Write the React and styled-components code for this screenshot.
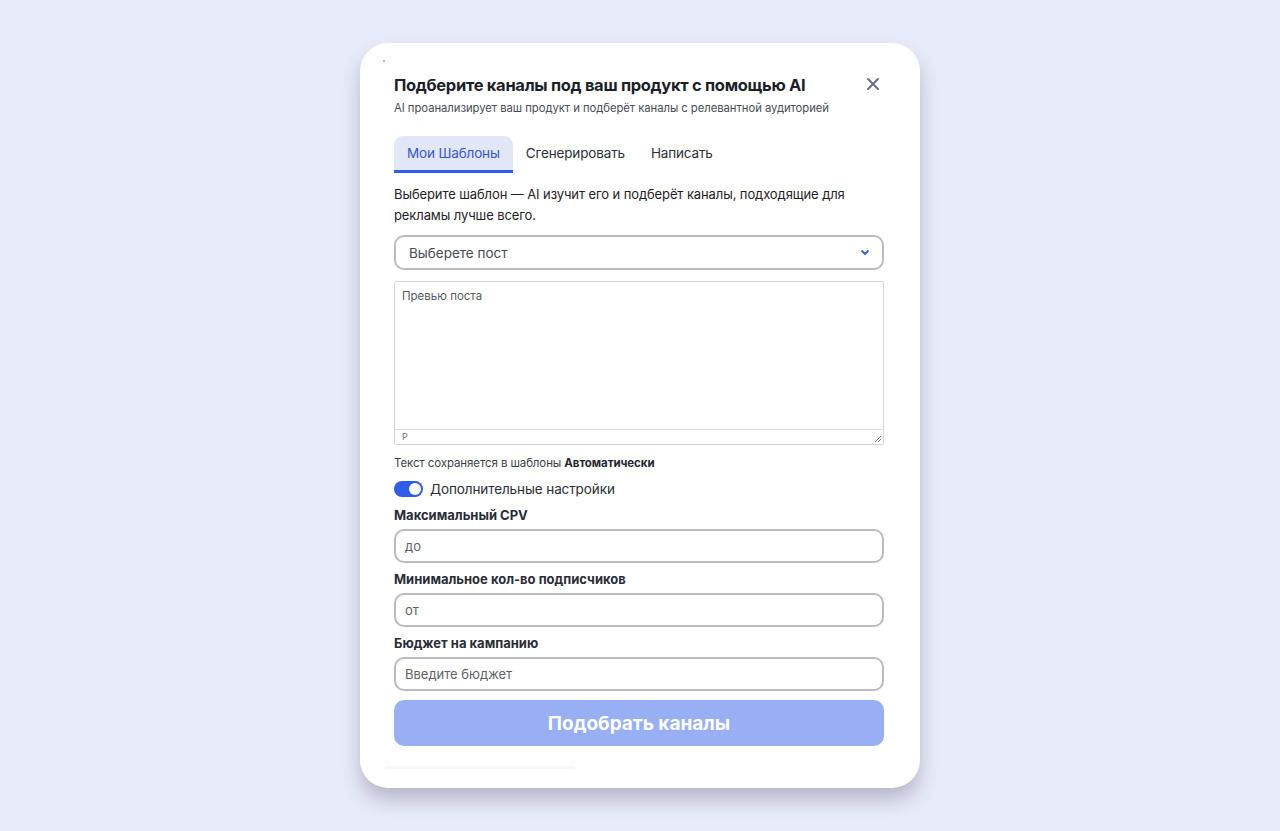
import React, { useState } from 'react';
import styled, { createGlobalStyle } from 'styled-components';

const Global = createGlobalStyle`
  html, body { margin: 0; padding: 0; }
  body {
    background: #e7eaf8;
    font-family: Inter, "Noto Sans", sans-serif;
    color: #1f2330;
  }
`;

const Page = styled.div`
  min-height: 831px;
  display: flex;
  justify-content: center;
  padding-top: 43px;
  box-sizing: border-box;
`;

const Card = styled.div`
  position: relative;
  width: 560px;
  height: 745px;
  box-sizing: border-box;
  background: #fff;
  border-radius: 28px;
  padding: 30px 36px 0 34px;
  box-shadow: 0 12px 18px rgba(60, 66, 90, 0.28);
`;

const Dot = styled.span`
  position: absolute;
  left: 23px;
  top: 17px;
  width: 2px;
  height: 2px;
  background: #9aa0ad;
  border-radius: 1px;
`;

const Header = styled.div`
  display: flex;
  justify-content: space-between;
  align-items: flex-start;
`;

const Title = styled.h2`
  margin: 0;
  font-size: 16.5px;
  font-weight: 700;
  line-height: 24px;
  letter-spacing: -0.3px;
  color: #1c1f2a;
`;

const Subtitle = styled.p`
  margin: 3px 0 0;
  font-size: 11.3px;
  line-height: 16px;
  letter-spacing: -0.05px;
  color: #474c58;
`;

const Close = styled.button`
  border: 0;
  background: none;
  padding: 0;
  margin: 4px 3px 0 0;
  width: 16px;
  height: 16px;
  color: #6a7080;
  cursor: pointer;
`;

const Tabs = styled.div`
  display: flex;
  margin-top: 20px;
`;

const Tab = styled.div`
  height: 37px;
  padding: 0 13px;
  display: flex;
  align-items: center;
  font-size: 13.5px;
  letter-spacing: -0.15px;
  border-radius: 9px 9px 0 0;
  box-sizing: border-box;
  color: ${p => (p.$active ? '#3556d6' : '#2c2f38')};
  background: ${p => (p.$active ? '#e2e7f8' : 'transparent')};
  border-bottom: 3px solid ${p => (p.$active ? '#2f5ce8' : 'transparent')};
`;

const Lead = styled.p`
  margin: 11px 0 0;
  font-size: 13px;
  line-height: 21px;
  letter-spacing: -0.1px;
  color: #1f2128;
`;

const Select = styled.div`
  margin-top: 9px;
  height: 35px;
  box-sizing: border-box;
  border: 2px solid #b9bbc0;
  border-radius: 10px;
  display: flex;
  align-items: center;
  justify-content: space-between;
  padding: 0 12px 0 13px;
  font-size: 13.5px;
  color: #464a53;
`;

const Preview = styled.div`
  position: relative;
  margin-top: 11px;
  height: 164px;
  box-sizing: border-box;
  border: 1px solid #d3d5d9;
  border-radius: 2px;
  display: flex;
  flex-direction: column;
`;

const PreviewBody = styled.div`
  flex: 1;
  padding: 7px 7px;
  font-size: 11.5px;
  color: #555a64;
  border-bottom: 1px solid #dcdee2;
`;

const PreviewFoot = styled.div`
  height: 14px;
  padding: 0 7px;
  font-size: 9px;
  line-height: 14px;
  color: #6c717b;
`;

const Grip = styled.svg`
  position: absolute;
  right: 1px;
  bottom: 1px;
`;

const Note = styled.p`
  margin: 11px 0 0;
  font-size: 11.5px;
  letter-spacing: -0.1px;
  color: #3b3f48;
  b { font-weight: 700; color: #23262e; }
`;

const ToggleRow = styled.label`
  display: flex;
  align-items: center;
  gap: 7px;
  margin-top: 11px;
  font-size: 13.5px;
  letter-spacing: -0.1px;
  color: #2a2d35;
`;

const Switch = styled.span`
  width: 29px;
  height: 16px;
  border-radius: 8px;
  background: #2f5ce8;
  position: relative;
  flex: none;
  &::after {
    content: '';
    position: absolute;
    right: 2px;
    top: 2px;
    width: 12px;
    height: 12px;
    border-radius: 50%;
    background: #fff;
  }
`;

const Label = styled.div`
  margin-top: ${p => (p.$first ? '9px' : '7px')};
  font-size: 13px;
  font-weight: 700;
  color: #2a2d36;
  line-height: 18px;
`;

const Input = styled.div`
  margin-top: 5px;
  height: 34px;
  box-sizing: border-box;
  border: 2px solid #b9bbc0;
  border-radius: 10px;
  display: flex;
  align-items: center;
  padding: 0 9px;
  font-size: 13px;
  color: #5b5f68;
`;

const Submit = styled.button`
  margin-top: 9px;
  width: 100%;
  height: 46px;
  border: 0;
  border-radius: 10px;
  background: #98aff3;
  color: #fff;
  font-family: inherit;
  font-size: 19px;
  font-weight: 700;
`;

const Faint = styled.div`
  margin: 20px 0 0 -9px;
  width: 190px;
  height: 3px;
  background: #f6f7fa;
`;

const App = () => {
  const [on] = useState(true);
  return (
    <>
      <Global />
      <Page>
        <Card>
          <Dot />
          <Header>
            <div>
              <Title>Подберите каналы под ваш продукт с помощью AI</Title>
              <Subtitle>AI проанализирует ваш продукт и подберёт каналы с релевантной аудиторией</Subtitle>
            </div>
            <Close aria-label="close">
              <svg width="14" height="14" viewBox="0 0 14 14">
                <path d="M2 2L12 12M12 2L2 12" stroke="currentColor" strokeWidth="2" strokeLinecap="round" />
              </svg>
            </Close>
          </Header>

          <Tabs>
            <Tab $active>Мои Шаблоны</Tab>
            <Tab>Сгенерировать</Tab>
            <Tab>Написать</Tab>
          </Tabs>

          <Lead>
            Выберите шаблон — AI изучит его и подберёт каналы, подходящие для рекламы лучше всего.
          </Lead>

          <Select>
            <span>Выберете пост</span>
            <svg width="10" height="7" viewBox="0 0 10 7">
              <path d="M2 2l3 3 3-3" fill="none" stroke="#3a5fd8" strokeWidth="1.8" strokeLinecap="round" strokeLinejoin="round" />
            </svg>
          </Select>

          <Preview>
            <PreviewBody>Превью поста</PreviewBody>
            <PreviewFoot>P</PreviewFoot>
            <Grip width="9" height="9" viewBox="0 0 9 9">
              <path d="M8 2L2 8M8 5L5 8" stroke="#777" strokeWidth="1" />
            </Grip>
          </Preview>

          <Note>Текст сохраняется в шаблоны <b>Автоматически</b></Note>

          <ToggleRow>
            {on && <Switch />}
            Дополнительные настройки
          </ToggleRow>

          <Label $first>Максимальный CPV</Label>
          <Input>до</Input>
          <Label>Минимальное кол-во подписчиков</Label>
          <Input>от</Input>
          <Label>Бюджет на кампанию</Label>
          <Input>Введите бюджет</Input>

          <Submit>Подобрать каналы</Submit>
          <Faint />
        </Card>
      </Page>
    </>
  );
};

export default App;
